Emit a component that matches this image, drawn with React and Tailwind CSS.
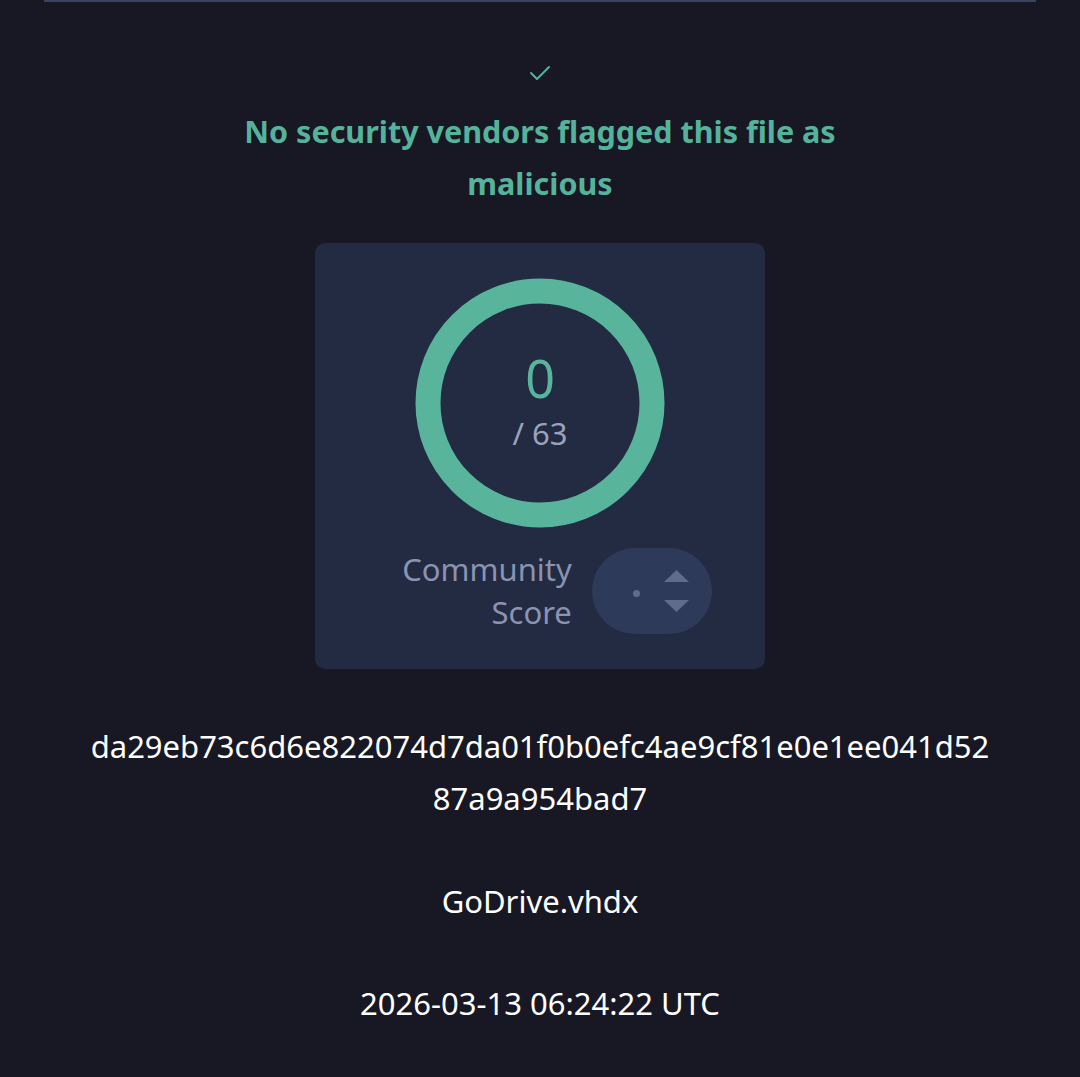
import React from 'react';

const font = { fontFamily: '"Noto Sans", "Open Sans", sans-serif' };

function Ring() {
    return (
        <div className="relative w-[252px] h-[252px]">
            <svg width="252" height="252" viewBox="0 0 252 252" className="absolute inset-0">
                <circle cx="126" cy="126" r="112" fill="none" stroke="#58b59c" strokeWidth="25" />
            </svg>
            <div className="absolute inset-0 flex flex-col items-center justify-center">
                <div className="text-[52px] leading-none text-[#58b59c] mt-[-6px]">0</div>
                <div className="text-[31px] leading-none text-[#9aa3bb] mt-[14px]">/ 63</div>
            </div>
        </div>
    );
}

function Voter() {
    return (
        <div className="w-[120px] h-[86px] rounded-full bg-[#2d3a5a] flex items-center pl-[41px] gap-[24px]">
            <span className="w-[7px] h-[7px] rounded-full bg-[#5f6c8c] mt-[4px]" />
            <div className="flex flex-col gap-[18px]">
                <svg width="25" height="12" viewBox="0 0 25 12"><path d="M12.5 0 L25 12 L0 12 Z" fill="#5f6c8c" /></svg>
                <svg width="25" height="12" viewBox="0 0 25 12"><path d="M0 0 L25 0 L12.5 12 Z" fill="#5f6c8c" /></svg>
            </div>
        </div>
    );
}

export default function App() {
    return (
        <div className="min-h-[1077px] bg-[#181825] text-white" style={font}>
            <div className="mx-[44px] h-[2px] bg-[#3a4460]" />
            <div className="flex flex-col items-center">
                {/* check */}
                <svg className="mt-[62px]" width="24" height="18" viewBox="0 0 24 18" fill="none">
                    <path d="M3 9 L9 15 L21 3" stroke="#4fb39a" strokeWidth="2" strokeLinecap="round" strokeLinejoin="round" />
                </svg>

                <h1 className="mt-[23px] w-[660px] text-center text-[30.5px] leading-[52px] font-bold text-[#56b39b]">
                    No security vendors flagged this file as malicious
                </h1>

                {/* score card */}
                <div className="mt-[34px] w-[450px] h-[426px] rounded-[10px] bg-[#232b42] flex flex-col items-center pt-[34px]">
                    <Ring />
                    <div className="mt-[19px] flex items-center gap-[20px] ml-[34px]">
                        <div className="text-right text-[31px] leading-[43px] text-[#8a93b2]">
                            Community<br />Score
                        </div>
                        <Voter />
                    </div>
                </div>

                <div className="mt-[51px] w-[905px] text-center text-[31px] leading-[52px] break-all">
                    da29eb73c6d6e822074d7da01f0b0efc4ae9cf81e0e1ee041d5287a9a954bad7
                </div>

                <div className="mt-[51px] text-[31px] leading-[52px]">GoDrive.vhdx</div>

                <div className="mt-[50px] text-[31px] leading-[52px]">2026-03-13 06:24:22 UTC</div>
            </div>
        </div>
    );
}
